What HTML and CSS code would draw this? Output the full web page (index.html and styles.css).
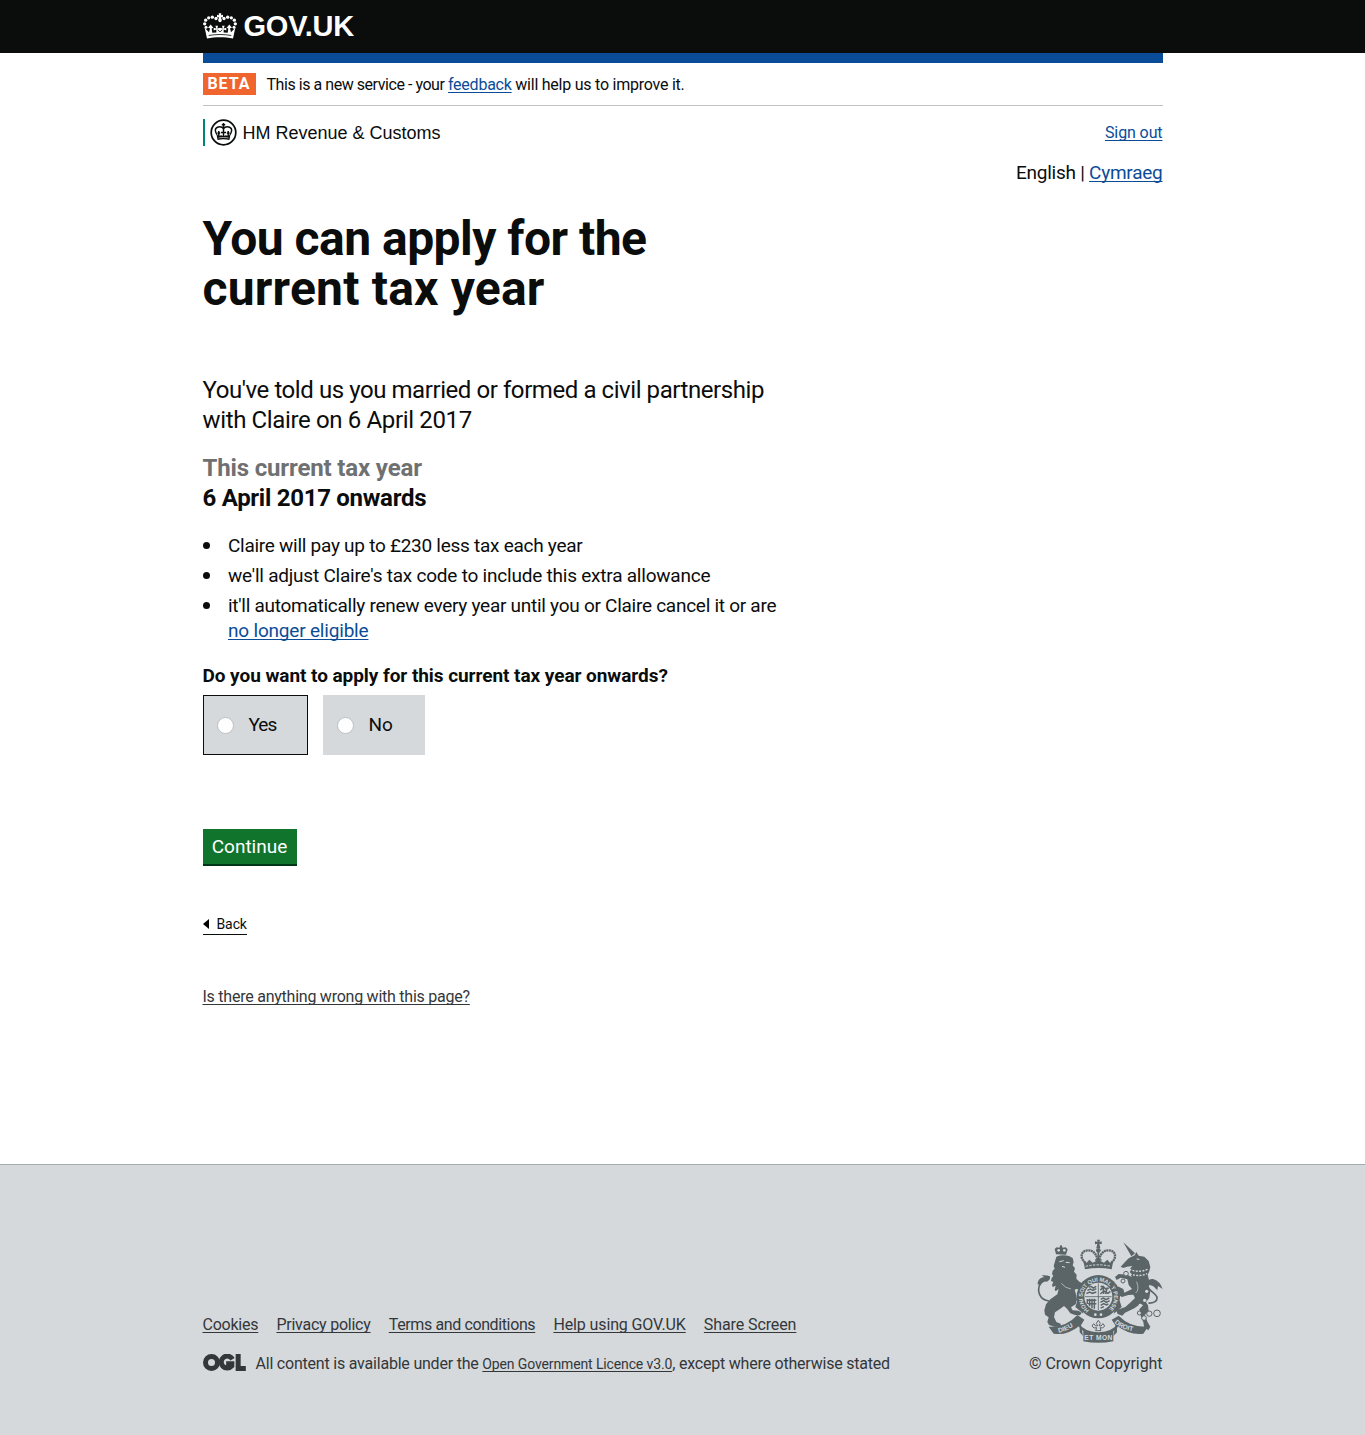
FILE: index.html
```html
<!DOCTYPE html>
<html lang="en">
<head>
<meta charset="utf-8">
<title>You can apply for the current tax year</title>
<link rel="stylesheet" href="styles.css">
</head>
<body>
<svg width="0" height="0" class="defs" aria-hidden="true">
  <symbol id="crown" viewBox="0 0 102 77">
    <g fill="currentColor">
      <path d="M47 0h8l-1 6 6-1v8l-6-1 2 9h-10l2-9-6 1V5l6 1z"/>
      <circle cx="51" cy="22" r="5"/>
      <circle cx="39" cy="16" r="5"/><circle cx="28" cy="12" r="5"/><circle cx="17" cy="14" r="5"/><circle cx="8" cy="21" r="5"/><circle cx="5" cy="32" r="5"/><circle cx="9" cy="42" r="4.500"/>
      <circle cx="63" cy="16" r="5"/><circle cx="74" cy="12" r="5"/><circle cx="85" cy="14" r="5"/><circle cx="94" cy="21" r="5"/><circle cx="97" cy="32" r="5"/><circle cx="93" cy="42" r="4.500"/>
      <path d="M12 76 5 44l13 13 3-12-6-1 8-10 8 10-5 2 2 13 12-1v-9l-8 3v-8l8 2-3-8h8l-2 8 8-2 8 2-2-8h8l-3 8 8-2v8l-8-3v9l12 1 2-13-5-2 8-10 8 10-6 1 3 12 13-13-7 32c-24-5-54-5-78 0z"/>
    </g>
    <path d="M17 67c22-4 46-4 68 0M44 50l7 6 7-6" fill="none" stroke="#0b0c0c" stroke-width="2.500"/>
  </symbol>
</svg>
<header class="global-header">
  <div class="container">
    <a class="govuk"><svg class="govuk-crown"><use href="#crown"/></svg><span>GOV.UK</span></a>
  </div>
</header>
<div class="container">
  <div class="blue-bar"></div>
  <div class="phase-banner"><strong class="phase-tag">BETA</strong><span class="phase-text"><span class="phase-lead">This is a new service - your </span><a href="#">feedback</a> will help us to improve it.</span></div>
  <div class="service-bar">
    <div class="organisation">
      <svg class="roundel" viewBox="0 0 27 27">
        <circle cx="13.500" cy="13.500" r="12.300" fill="none" stroke="currentColor" stroke-width="1.700"/>
        <g fill="none" stroke="currentColor" stroke-width="1.500">
          <path d="M13.500 4v5M11.800 5.800h3.400"/>
          <path d="M13.500 9.500C12 7 7.500 7 5.800 9.500c-1.300 2.200 0 4.200 1.300 6.200M13.500 9.500C15 7 19.500 7 21.200 9.500c1.300 2.200 0 4.200-1.300 6.200"/>
          <path d="M13.500 9v9M11 13.500h5M8.800 12v5.500M7.500 14h2.700M18.200 12v5.500M16.800 14h2.700"/>
        </g>
        <path d="M6.400 15l2.200 2 2.700-.8 2.200 1 2.200-1 2.700.8 2.200-2-1.200 6c-3.800-1-8-1-11.800 0z" fill="currentColor"/>
        <path d="M8.500 19c3.500-.7 6.500-.7 10 0" fill="none" stroke="#fff" stroke-width=".6"/>
      </svg>
      <span>HM Revenue &amp; Customs</span>
    </div>
    <a class="sign-out" href="#">Sign out</a>
  </div>
  <div class="languages">English | <a href="#">Cymraeg</a></div>
  <main>
    <h1><span class="first-line">You can apply for the</span> <span class="second-line">current tax year</span></h1>
    <p class="lede">You've told us you married or formed a civil partnership<br><span class="date-line">with Claire on 6 April 2017</span></p>
    <h2><span class="muted">This current tax year</span><br>6 April 2017 onwards</h2>
    <ul class="benefits">
      <li>Claire will pay up to £230 less tax each year</li>
      <li class="tax-code">we'll adjust Claire's tax code to include this extra allowance</li>
      <li>it'll automatically renew every year until you or Claire cancel it or are <br><a href="#">no longer eligible</a></li>
    </ul>
    <h3>Do you want to apply for this current tax year onwards?</h3>
    <div class="choices">
      <label class="choice choice-yes"><span class="radio"></span>Yes</label>
      <label class="choice choice-no"><span class="radio"></span>No</label>
    </div>
    <button class="continue" type="button">Continue</button>
    <div class="back-row"><a class="back"><svg width="6" height="10" viewBox="0 0 6 10"><path d="M6 0v10L0 5z"/></svg>Back</a></div>
    <a class="report" href="#">Is there anything wrong with this page?</a>
  </main>
</div>
<footer>
  <div class="container footer-inner">
    <div class="footer-meta">
      <nav><a href="#">Cookies</a><a href="#">Privacy policy</a><a class="terms" href="#">Terms and conditions</a><a class="help" href="#">Help using GOV.UK</a><a class="share" href="#">Share Screen</a></nav>
      <div class="licence">
        <svg class="ogl" viewBox="0 0 128 51"><g fill="none" stroke="currentColor" stroke-width="15"><circle cx="25" cy="25.500" r="18"/><path d="M88 15.500A18 18 0 1 0 86 36V29H69M105 0v43.500h23"/></g></svg>
        <span>All content is available under the <a href="#">Open Government Licence v3.0</a>, except where otherwise stated</span>
      </div>
    </div>
    <div class="copyright">
      <svg class="crest" viewBox="51 27 378 312">
        <defs>
          <path id="garter" d="M208 240A47 47 0 1 1 262 240"/>
          <path id="dieu" d="M116 308Q156 300 184 268"/>
          <path id="droit" d="M283 278Q308 305 368 306"/>
        </defs>
        <g fill="currentColor">
          <path d="M108 73l-4-16 6-5 8 1 3-7h4l3 7 9-1 6 6-5 16z"/>
          <path d="M109 80q18-7 38-2l11 6 3 12-3 10 7 9-3 10 8 9-1 12 9 9 8 4 9-5 6 6-5 10-11 9-15-2-6 2 4 14 3 16-4 14-14 9 5 9 17 1 10 6-5 8-15-1-14-5-10-14-9-8-12 9-15 10-3 14 7 15 13 5v7l-17 2-18-5-5-9 4-14-11-8-2-13 5-18 13-15 21-15 4-16-9 7-3-5 3-12-9 4-2-6 4-9-7-3 2-9 5-6-4-6 2-10 6-6-3-8z"/>
          <path d="M315 96l11-11 18-9 5-10 7 11 17 3 13 13 5 18-3 13-5 10 4 16-3 20 7 14-3 20-10 13 6 9 2 17-12 12 9 22 8 13-6 11-13-11-2-14-9-21-3-17 11-12-7-5-19 14-28 13-8 9-14-5-5-11 11-4 17-6 16-14 13-13-5-10-15 1-19 6-7-4-2-10-9 9-5-11 10-16 17 8 3 11 23-11-10-12-4-17-20-5-12 7-5-9 11-9 26 2 13 7-5-15 1-11 6-7-16 2-11 4-8-4z"/>
          <path d="M310 37l24 42 11-9z"/>
          <path d="M53 163c0-14 9-21 20-21l-8-6q14-2 25 3 2 11-9 16-12-2-19 11z"/>
          <path d="M380 166c2-15 8-21 21-18q18 5 27 29l-14-9-2 13-12-12q-14-6-20-3z"/>
        </g>
        <g fill="none" stroke="currentColor" stroke-width="5">
          <path d="M61 160c-12 23-2 50 26 53M385 160c-6 23 21 26 26 41 2 14-12 19-26 18"/>
          <path d="M196 98c-20-17-11-37 9-37 17 0 27 15 28 35M274 98c20-17 11-37-9-37-17 0-27 15-28 35" stroke-width="7" stroke-dasharray="6 1.500"/>
          <path d="M235 60v38M225 90h20" stroke-width="5"/>
        </g>
        <g fill="currentColor">
          <path d="M231 29h9l-2 7 7-2v9l-7-2 3 13h-12l3-13-7 2v-9l8 2z"/>
          <circle cx="235" cy="61" r="7"/>
          <path d="M190 92l10 6 8-9 10 9 17-8 17 8 10-9 8 9 10-6-5 26q-39-8-80 0z"/>
          <circle cx="235" cy="200" r="65"/>
          <path d="M184 224l-12-12-6 19 24 20M287 224l12-12 6 19-24 20"/>
        </g>
        <circle cx="235" cy="200" r="42" fill="#d5d9dc"/>
        <g fill="none" stroke="currentColor" stroke-width="4.500">
          <path d="M235 160v80M195 200h80" stroke-width="2.500"/>
          <path d="M206 172l7-3 7 5 9-5M202 181l9-4 8 4 10-5M199 191l10-5 8 4 12-4M242 168l8 5M241 181l9-11 8 8 8-4M241 192l11-9 12 7 7-6M249 167l2 25M262 172l-5 20M202 207v15M209 206v23M216 206v29M223 206v30M202 211h27M204 221h25M242 208l8-4 8 5 10-5M241 217l10-5 8 5 10-5M242 226l9-5 8 4 6-3M242 234l10-4"/>
        </g>
        <g fill="none" stroke="#d5d9dc">
          <path d="M197 109q38-9 76 0" stroke-width="3" stroke-dasharray="7 4"/>
          <path d="M118 95l13-3M137 97l12 1M126 109l9 3M350 87l8 1" stroke-width="3"/>
          <path d="M328 118q28 12 58-1M329 131q27 11 52 0" stroke-width="4" stroke-dasharray="6 4"/>
          <path d="M124 160q12 15 29 17M350 155q9 25-3 34" stroke-width="2"/>
        </g>
        <g fill="#d5d9dc">
          <circle cx="116" cy="61" r="4"/><circle cx="133" cy="61" r="4"/><circle cx="226" cy="254" r="4"/><circle cx="243" cy="254" r="4"/>
          <circle cx="380" cy="184" r="5"/><circle cx="374" cy="211" r="5"/><circle cx="360" cy="225" r="4"/>
        </g>
        <g stroke="currentColor" stroke-width="3" fill="#d5d9dc">
          <circle cx="318" cy="131" r="7"/><circle cx="309" cy="153" r="6"/><circle cx="358" cy="249" r="6"/><circle cx="372" cy="264" r="7"/><circle cx="388" cy="251" r="8"/><circle cx="411" cy="250" r="10"/>
        </g>
        <path d="M86 290q52 3 86-35l21 14-10 17 6 32-10-11 0-20q-39 31-78 24zM384 290q-53 3-88-33l-21 12 11 17-6 32 11-11 0-20q37 29 79 24z" fill="currentColor"/>
        <path d="M175 278q-2 13 15 26v30q45 9 90 0v-30q17-10 15-26-15 26-60 29-43-2-60-29z" fill="currentColor"/>
        <path d="M235 271l-6 9 4 7-6 1-6-7-5 7 6 6 8-1-3 9h16l-3-9 8 1 6-6-5-7-6 7-6-1 4-7z" fill="#d5d9dc" stroke="currentColor" stroke-width="3"/>
        <g class="crest-words">
          <text class="garter-words"><textPath href="#garter" textLength="232">HONI SOIT QUI MAL Y PENSE</textPath></text>
          <text><textPath href="#dieu">DIEU</textPath></text>
          <text><textPath href="#droit">DROIT</textPath></text>
          <text x="193" y="330" textLength="84">ET MON</text>
        </g>
      </svg>
      <span>© Crown Copyright</span>
    </div>
  </div>
</footer>
</body>
</html>
```
FILE: styles.css
```css
* { box-sizing: border-box; }
body { margin: 0; background: #fff; color: #0b0c0c; font-family: Roboto, "Liberation Sans", sans-serif; font-size: 16px; line-height: 20px; letter-spacing: -.24px; }
a { color: #0b4c98; text-decoration: underline; text-decoration-thickness: 1px; text-underline-offset: 2px; text-decoration-skip-ink: none; }
svg { display: block; flex: none; }
.defs { position: absolute; }
.container { width: 960px; margin: 0 auto; }
.global-header { height: 53px; background: #0b0c0c; }
.govuk { display: flex; align-items: center; gap: 7px; height: 52px; color: #fff; text-decoration: none; font: bold 29px/32px "Liberation Sans", Arial, sans-serif; letter-spacing: -.2px; }
.govuk-crown { width: 34px; height: 26px; }
.blue-bar { height: 10px; background: #0b4c98; }
.phase-banner { display: flex; align-items: center; gap: 11px; height: 43px; border-bottom: 1px solid #bfc1c3; letter-spacing: -.24px; }
.phase-text { padding-top: 1px; }
.phase-lead { letter-spacing: -.45px; }
.phase-tag { width: 53px; height: 22px; background: #f0642d; color: #fff; line-height: 22px; text-align: center; letter-spacing: 1px; }
.service-bar { display: flex; justify-content: space-between; align-items: center; height: 53px; }
.sign-out { padding-top: 1px; letter-spacing: -.1px; }
.organisation { display: flex; align-items: center; gap: 6px; height: 27px; padding-left: 5px; border-left: 2px solid #008476; font: 18px/27px "Liberation Sans", Arial, sans-serif; letter-spacing: 0; }
.roundel { width: 27px; height: 27px; }
.organisation span { padding-top: 1px; }
.languages { height: 25px; margin-top: 1px; text-align: right; font-size: 19px; line-height: 25px; letter-spacing: -.25px; }
main { height: 979px; padding-top: 29px; }
h1, h2, h3, p, ul { margin: 0; padding: 0; }
h1 { font-size: 48px; line-height: 50px; }
.first-line, .second-line { display: block; }
.first-line { letter-spacing: -.52px; }
.second-line { letter-spacing: .2px; }
.lede { margin-top: 61px; font-size: 24px; line-height: 30px; letter-spacing: -.43px; }
.date-line { letter-spacing: -.36px; }
h2 { margin-top: 18px; font-size: 24px; line-height: 30px; letter-spacing: -.28px; }
.muted { color: #6f7072; letter-spacing: -.15px; }
.benefits { margin-top: 20px; font-size: 19px; line-height: 25px; letter-spacing: -.27px; list-style: none; }
.benefits li { position: relative; padding-left: 25.500px; margin-bottom: 5px; }
.benefits li::before { content: ""; position: absolute; left: 0; top: 9px; width: 7px; height: 7px; border-radius: 50%; background: #0b0c0c; }
.benefits .tax-code { letter-spacing: -.22px; }
.benefits a { letter-spacing: -.19px; }
h3 { margin-top: 20px; font-size: 19px; line-height: 25px; letter-spacing: -.06px; }
.choices { display: flex; gap: 15px; margin-top: 7px; }
.choice { display: flex; align-items: center; gap: 15px; width: 105px; height: 60px; padding-left: 13px; border: 1px solid transparent; background: #d5d9dc; font-size: 19px; }
.choice-yes { border-color: #0b0c0c; letter-spacing: -1px; }
.choice-no { width: 102px; letter-spacing: 0; }
.radio { width: 17px; height: 17px; border: 1px solid #bcbfc1; border-radius: 50%; background: #fff; }
.continue { display: block; width: 94px; height: 37px; margin-top: 74px; padding: 0; border: 0; border-bottom: 2px solid #003618; background: #10742d; color: #fff; font: 19px/34px Roboto, "Liberation Sans", sans-serif; letter-spacing: 0; }
.back-row { height: 84px; padding-top: 48px; }
.back { display: inline-flex; align-items: center; gap: 8px; height: 20px; border-bottom: 1px solid #0b0c0c; color: #0b0c0c; font-size: 14px; text-decoration: none; letter-spacing: -.1px; }
.report { display: inline-block; margin-top: 37px; color: #33373a; }
footer { height: 271px; border-top: 1px solid #a1acb2; background: #d5d9dc; color: #33373a; }
footer a { color: inherit; }
.footer-inner { display: flex; justify-content: space-between; padding-top: 74px; }
.footer-meta { padding-top: 76px; }
nav { display: flex; gap: 18.200px; }
.terms { letter-spacing: -.38px; }
.help { letter-spacing: -.12px; }
.share { letter-spacing: -.1px; }
.licence { display: flex; align-items: center; gap: 10px; margin-top: 19px; letter-spacing: -.21px; }
.licence a { font-size: 14px; letter-spacing: -.13px; }
.ogl { width: 43px; height: 17px; margin-top: -3px; }
.copyright { display: flex; flex-direction: column; align-items: flex-end; }
.crest { width: 126px; height: 104px; color: #5b6568; }
.copyright span { margin-top: 11px; letter-spacing: -.06px; }
.crest-words { fill: #d5d9dc; font: bold 20px "Liberation Sans", sans-serif; letter-spacing: 0; }
.garter-words { font-size: 17px; }
```
